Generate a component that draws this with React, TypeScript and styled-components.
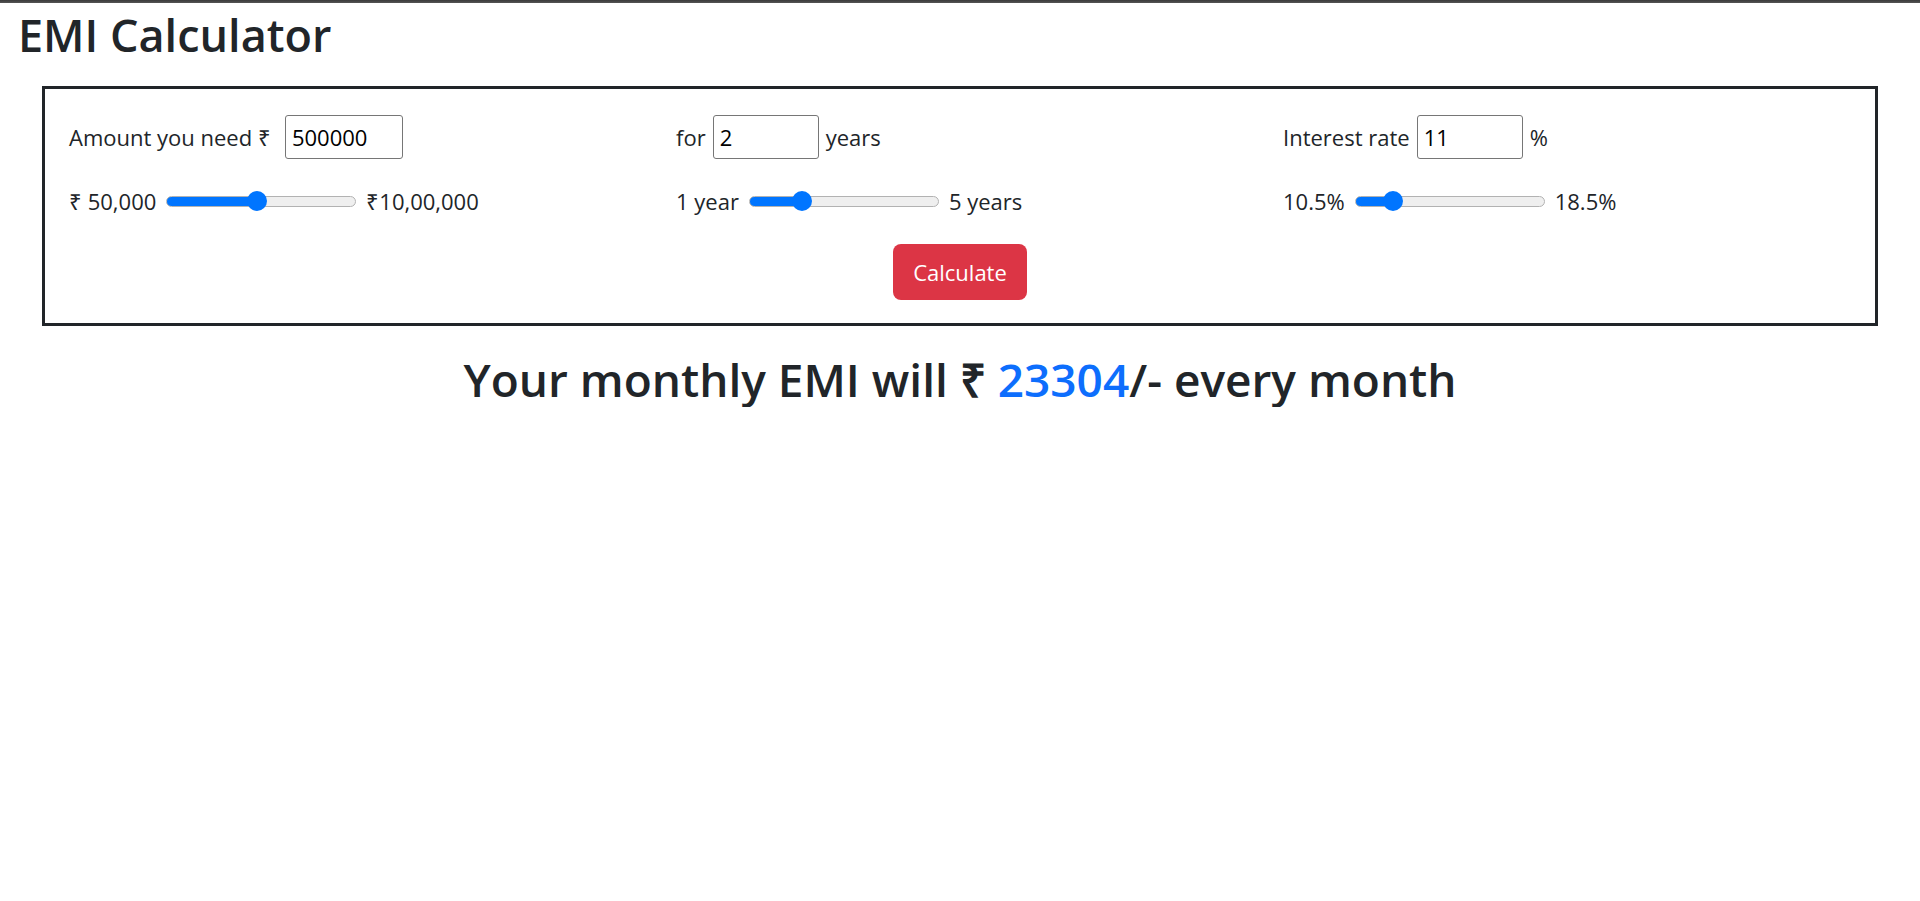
import React, { useState } from "react";
import styled, { createGlobalStyle } from "styled-components";

const GlobalStyle = createGlobalStyle`
  body {
    margin: 0;
    background: #ffffff;
    color: #212529;
    font-family: "Open Sans", "Liberation Sans", sans-serif;
  }
`;

const TopBar = styled.div`
  height: 3px;
  background: linear-gradient(#3a3a3a, #555555);
`;

const Title = styled.h1`
  margin: 4px 0 0 0;
  padding-left: 18px;
  font-size: 45px;
  font-weight: 600;
  line-height: 1.25;
`;

const Card = styled.div`
  margin: 23px 42px 0 42px;
  border: 3px solid #212529;
  padding: 26px 24px 23px 24px;
`;

const Grid = styled.div`
  display: grid;
  grid-template-columns: repeat(3, 568px);
  column-gap: 39px;
  row-gap: 25px;
`;

const FieldRow = styled.div<{ $gap: number }>`
  display: flex;
  align-items: center;
  gap: ${(p) => p.$gap}px;
  font-size: 22px;
  height: 44px;
`;

const SliderRow = styled.div`
  display: flex;
  align-items: center;
  gap: 10px;
  font-size: 22px;
  height: 34px;
`;

const NumInput = styled.input<{ $w: number }>`
  box-sizing: border-box;
  width: ${(p) => p.$w}px;
  height: 44px;
  border: 1px solid #767676;
  border-radius: 3px;
  padding: 0 6px;
  font-family: "Open Sans", "Liberation Sans", sans-serif;
  font-size: 22px;
  color: #000000;
  background: #ffffff;
  outline: none;
`;

const Range = styled.input<{ $fill: number }>`
  -webkit-appearance: none;
  appearance: none;
  width: 190px;
  height: 20px;
  margin: 0;
  background: transparent;
  &::-webkit-slider-runnable-track {
    height: 11px;
    box-sizing: border-box;
    border-radius: 6px;
    border: 1px solid #b2b2b2;
    background: linear-gradient(
      to right,
      #0075ff 0,
      #0075ff calc(10px + ${(p) => p.$fill} * (100% - 20px)),
      #efefef calc(10px + ${(p) => p.$fill} * (100% - 20px)),
      #efefef 100%
    );
  }
  &::-webkit-slider-thumb {
    -webkit-appearance: none;
    appearance: none;
    width: 20px;
    height: 20px;
    border-radius: 50%;
    background: #0075ff;
    border: none;
    margin-top: -5.5px;
  }
`;

const ButtonRow = styled.div`
  display: flex;
  justify-content: center;
  margin-top: 26px;
`;

const CalcButton = styled.button`
  width: 134px;
  height: 56px;
  border: none;
  border-radius: 8px;
  background: #dc3545;
  color: #ffffff;
  font-family: "Open Sans", "Liberation Sans", sans-serif;
  font-size: 22px;
  cursor: pointer;
`;

const Result = styled.h2`
  margin: 26px 0 0 0;
  text-align: center;
  font-size: 46px;
  font-weight: 600;
  line-height: 1.2;
`;

const Amount = styled.span`
  color: #0d6efd;
`;

export default function App() {
  const [amount, setAmount] = useState("500000");
  const [years, setYears] = useState("2");
  const [rate, setRate] = useState("11");

  return (
    <>
      <GlobalStyle />
      <TopBar />
      <Title>EMI Calculator</Title>
      <Card>
        <Grid>
          <FieldRow $gap={14}>
            <span>Amount you need ₹</span>
            <NumInput $w={118} value={amount} onChange={(e) => setAmount(e.target.value)} />
          </FieldRow>
          <FieldRow $gap={7}>
            <span>for</span>
            <NumInput $w={106} value={years} onChange={(e) => setYears(e.target.value)} />
            <span>years</span>
          </FieldRow>
          <FieldRow $gap={7}>
            <span>Interest rate</span>
            <NumInput $w={106} value={rate} onChange={(e) => setRate(e.target.value)} />
            <span>%</span>
          </FieldRow>
          <SliderRow>
            <span>₹ 50,000</span>
            <Range type="range" min={0} max={1000} defaultValue={474} $fill={0.474} />
            <span>₹10,00,000</span>
          </SliderRow>
          <SliderRow>
            <span>1 year</span>
            <Range type="range" min={0} max={1000} defaultValue={250} $fill={0.25} />
            <span>5 years</span>
          </SliderRow>
          <SliderRow>
            <span>10.5%</span>
            <Range type="range" min={0} max={1000} defaultValue={165} $fill={0.165} />
            <span>18.5%</span>
          </SliderRow>
        </Grid>
        <ButtonRow>
          <CalcButton>Calculate</CalcButton>
        </ButtonRow>
      </Card>
      <Result>
        Your monthly EMI will ₹ <Amount>23304</Amount>/- every month
      </Result>
    </>
  );
}
